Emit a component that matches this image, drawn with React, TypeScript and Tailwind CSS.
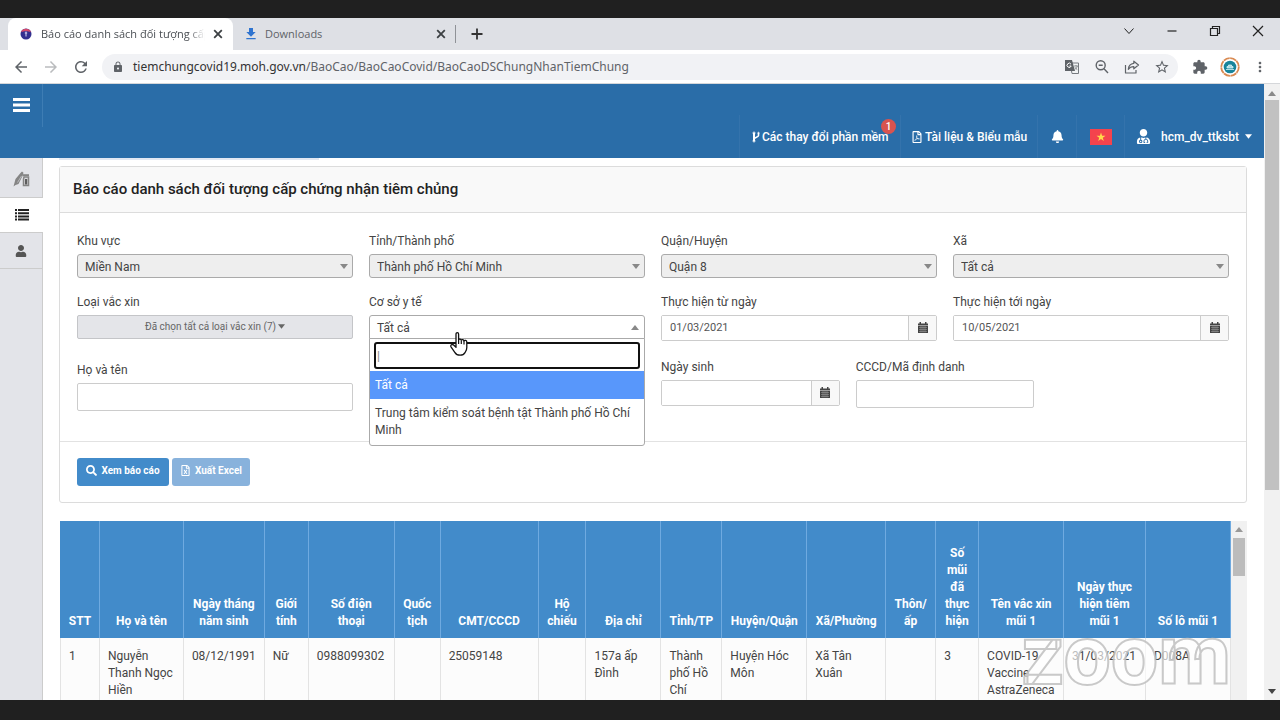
import React from "react";
import { FaBell, FaRegFileExcel, FaRegFilePdf, FaSearch, FaUser, FaUserMd } from "react-icons/fa";
import {
  MdArrowBack,
  MdArrowForward,
  MdExtension,
  MdFileDownload,
  MdLock,
  MdMoreVert,
  MdRefresh,
  MdStarBorder,
} from "react-icons/md";

type Column = { title: string; value: string; width: number };

const COLUMNS: Column[] = [
  { title: "STT", value: "1", width: 39 },
  { title: "Họ và tên", value: "Nguyễn Thanh Ngọc Hiền", width: 84 },
  { title: "Ngày tháng năm sinh", value: "08/12/1991", width: 81 },
  { title: "Giới tính", value: "Nữ", width: 44 },
  { title: "Số điện thoại", value: "0988099302", width: 86 },
  { title: "Quốc tịch", value: "", width: 46 },
  { title: "CMT/CCCD", value: "25059148", width: 98 },
  { title: "Hộ chiếu", value: "", width: 48 },
  { title: "Địa chỉ", value: "157a ấp Đình", width: 75 },
  { title: "Tỉnh/TP", value: "Thành phố Hồ Chí Minh", width: 61 },
  { title: "Huyện/Quận", value: "Huyện Hóc Môn", width: 85 },
  { title: "Xã/Phường", value: "Xã Tân Xuân", width: 79 },
  { title: "Thôn/ ấp", value: "", width: 50 },
  { title: "Số mũi đã thực hiện", value: "3", width: 43 },
  { title: "Tên vắc xin mũi 1", value: "COVID-19 Vaccine AstraZeneca", width: 85 },
  { title: "Ngày thực hiện tiêm mũi 1", value: "31/03/2021", width: 82 },
  { title: "Số lô mũi 1", value: "D008A", width: 85 },
];

const TOTAL_WIDTH = COLUMNS.reduce((sum, c) => sum + c.width, 0);

function Caret({ up = false, className = "" }: { up?: boolean; className?: string }) {
  return (
    <svg viewBox="0 0 8 5" className={`h-[5px] w-2 fill-current ${className}`} aria-hidden="true">
      <path d={up ? "M0 5h8L4 0z" : "M0 0h8L4 5z"} />
    </svg>
  );
}

function CloseIcon() {
  return (
    <svg viewBox="0 0 14 14" className="size-3.5" stroke="#3c4043" strokeWidth="1.800" aria-hidden="true">
      <path d="m3.200 3.200 7.600 7.600M10.800 3.200l-7.600 7.600" />
    </svg>
  );
}

function TranslateIcon() {
  return (
    <svg viewBox="0 0 16 16" className="size-4" aria-hidden="true">
      <path d="M6 4h8.5v10.5H8z" fill="#f1f3f4" stroke="#777b80" />
      <path d="M1 1h7l3 11H1z" fill="#5f6368" />
      <path d="M7 5.200a2.100 2.100 0 1 0 .2 1.800H5.400" fill="none" stroke="#fff" />
      <path d="M10 7h4M12 6v1M13.300 7c-.4 1.700-1.300 2.800-2.600 3.500M11 8.200c.6 1.200 1.300 1.900 2.300 2.400" fill="none" stroke="#777b80" strokeWidth=".8" />
    </svg>
  );
}

function ZoomOutIcon() {
  return (
    <svg viewBox="0 0 16 16" className="size-4" fill="none" stroke="#5f6368" strokeWidth="1.400" aria-hidden="true">
      <circle cx="6.700" cy="6.300" r="4.500" />
      <path d="M10 9.700l4 4.200M4.700 6.300h4" />
    </svg>
  );
}

function ShareIcon() {
  return (
    <svg viewBox="0 0 16 16" className="size-4" fill="none" stroke="#5f6368" strokeWidth="1.200" strokeLinejoin="round" aria-hidden="true">
      <path d="M1.500 6v8h10.500v-3" />
      <path d="M9.800 2.200 14.500 6l-4.700 3.800V7.600c-2.700 0-4.200.8-5.500 2.700.3-3.300 2.200-5.500 5.500-5.900z" />
    </svg>
  );
}

function MenuIcon() {
  return (
    <svg viewBox="0 0 17 15" className="h-[15px] w-[17px] fill-current" aria-hidden="true">
      <path d="M0 0h17v3H0zM0 5.500h17v3H0zM0 11h17v3H0z" />
    </svg>
  );
}

function CalendarIcon() {
  return (
    <svg viewBox="0 0 10 11" className="h-[11px] w-2.5" aria-hidden="true">
      <path d="M0 1.500h1.500V0H3v1.500h4V0h1.500v1.500H10V11H0z" fill="#444" />
      <path d="M1 5.500h8M1 7.500h8M1 9.500h8M3 4v6.500M5 4v6.500M7 4v6.500" stroke="#a5a5a5" strokeWidth=".5" />
      <path d="M0 3.500h10" stroke="#ddd" strokeWidth=".6" />
    </svg>
  );
}

function ListIcon() {
  return (
    <svg viewBox="0 0 14 12" className="h-3 w-3.5 fill-[#222]" aria-hidden="true">
      <path d="M0 0h2v2H0zM3 0h11v2H3zM0 3.200h2v2H0zM3 3.200h11v2H3zM0 6.400h2v2H0zM3 6.400h11v2H3zM0 9.600h2v2H0zM3 9.600h11v2H3z" />
    </svg>
  );
}

function VaccineIcon() {
  return (
    <svg viewBox="0 0 17 16" className="h-4 w-[17px]" aria-hidden="true">
      <path d="M.5 15.500 2.500 8l5-6L9 .5l1.500 1.300L9.500 5 5.500 13l-3 1z" fill="#858585" />
      <path d="M4.500 11.500 8.500 5" stroke="#b9b9bd" />
      <path d="M11 6h4.500v8.500h-5V8z" fill="#d8d8dc" stroke="#858585" strokeWidth="1.500" />
      <path d="M12 8h2.200v5.500H12z" fill="#5d5d5d" />
      <path d="M9.500 4.200h6.500" stroke="#858585" strokeWidth="2" />
    </svg>
  );
}

function HandCursor() {
  return (
    <svg viewBox="0 0 18 24" className="pointer-events-none absolute top-[17px] left-[81px] z-20 h-6 w-[18px]" aria-hidden="true">
      <path
        d="M6 2.200c0-2 2.600-2 2.600 0v5.600c.3-1 2.400-1 2.700.4.500-.9 2.300-.7 2.600.6.700-.8 2.900-.5 2.900 1.300v5.400c0 2.500-1 3.600-1.800 5.100-1 1.800-2.700 2.600-4.900 2.600-2.600 0-4.100-.9-5.300-2.900L1 14.800c-.8-1.700 1.100-3 2.600-1.700L6 15.300z"
        fill="#fff"
        stroke="#111"
        strokeWidth="1.300"
        strokeLinejoin="round"
      />
      <path d="M8.600 8v4M11.300 8.500V12M14 9v3.500" stroke="#111" strokeWidth="1.200" />
    </svg>
  );
}

function Label({ id, children }: { id: string; children: React.ReactNode }) {
  return (
    <label htmlFor={id} className="block h-6 text-xs leading-[22px]">
      {children}
    </label>
  );
}

function SelectField({ id, label, value }: { id: string; label: string; value: string }) {
  return (
    <div>
      <Label id={id}>{label}</Label>
      <div className="relative">
        <select
          id={id}
          className="block h-6 w-full appearance-none rounded-[3px] border border-[#aaa] bg-[#eee] pt-px pr-6 pl-[7px] text-xs text-[#444]"
        >
          <option>{value}</option>
        </select>
        <Caret className="pointer-events-none absolute top-2.5 right-[5px] text-[#888]" />
      </div>
    </div>
  );
}

function DateField({ id, label, value }: { id: string; label: string; value: string }) {
  return (
    <div>
      <Label id={id}>{label}</Label>
      <div className="flex h-[26px] rounded-[2px] border border-[#ccc]">
        <input id={id} defaultValue={value} className="min-w-0 flex-1 bg-white pl-2 text-[11px] text-[#555] outline-none" />
        <button type="button" aria-label={`Chọn ${label}`} className="flex w-7 items-center justify-center border-l border-[#ccc] bg-[#f8f8f8] pb-0.5">
          <CalendarIcon />
        </button>
      </div>
    </div>
  );
}

function TextField({ id, label }: { id: string; label: string }) {
  return (
    <div>
      <Label id={id}>{label}</Label>
      <input id={id} className="block h-7 w-full rounded-[2px] border border-[#ccc] bg-white px-2 text-[11px] outline-none" />
    </div>
  );
}

function BrowserChrome() {
  return (
    <div className="shrink-0 font-['Open_Sans','Noto_Sans',sans-serif] text-[#5f6368]">
      <div className="flex h-8 items-stretch bg-[#dee0e5] pl-2">
        <div className="flex w-[225px] items-center rounded-t-lg bg-white pr-2 pl-3">
          <svg viewBox="0 0 12 12" className="size-3 shrink-0" aria-hidden="true">
            <circle cx="6" cy="6" r="5.500" fill="#33308f" />
            <path d="M1 4a5.500 5.500 0 0 1 10 0L6 3z" fill="#d6496b" />
            <path d="M6 3.500v5M4.800 5h2.400" stroke="#d9d5f5" />
          </svg>
          <span className="ml-[9px] min-w-0 flex-1 overflow-hidden mask-r-from-90% text-[11px] whitespace-nowrap text-[#4b4f54]">
            Báo cáo danh sách đối tượng cấp
          </span>
          <button type="button" aria-label="Đóng thẻ" className="ml-1.5">
            <CloseIcon />
          </button>
        </div>
        <div className="flex w-[223px] items-center pl-2.5">
          <MdFileDownload className="size-4 text-[#2f74d0]" />
          <span className="ml-1.5 flex-1 text-[11px]">Downloads</span>
          <button type="button" aria-label="Đóng thẻ" className="mr-[7px]">
            <CloseIcon />
          </button>
          <span className="h-[18px] w-px bg-[#8f9297]" />
        </div>
        <button type="button" aria-label="Thẻ mới" className="ml-[15px] text-[#333]">
          <svg viewBox="0 0 12 12" className="size-3" stroke="currentColor" strokeWidth="1.800" aria-hidden="true">
            <path d="M6 .5v11M.5 6h11" />
          </svg>
        </button>
        <div className="mb-1.5 ml-auto flex items-center gap-[31px] pr-4 text-[#222]">
          <svg viewBox="0 0 12 12" className="size-3" fill="none" stroke="currentColor" aria-hidden="true">
            <path d="M1.500 3.500 6 8.500l4.500-5" />
          </svg>
          <svg viewBox="0 0 12 12" className="size-3" stroke="currentColor" strokeWidth="1.200" aria-hidden="true">
            <path d="M1.500 6h9" />
          </svg>
          <svg viewBox="0 0 12 12" className="size-3" fill="none" stroke="currentColor" strokeWidth="1.200" aria-hidden="true">
            <path d="M1.500 3.500h7v7h-7zM3.500 3.500v-2h7v7h-2" />
          </svg>
          <svg viewBox="0 0 12 12" className="size-3" stroke="currentColor" strokeWidth="1.200" aria-hidden="true">
            <path d="m1 1 10 10M11 1 1 11" />
          </svg>
        </div>
      </div>
      <div className="flex h-[34px] items-center border-b border-[#d5d7da] bg-white pr-3 pl-3">
        <MdArrowBack className="size-[18px]" />
        <MdArrowForward className="ml-3 size-[18px] text-[#babcbe]" />
        <MdRefresh className="ml-3 size-[18px]" />
        <div className="ml-3 flex h-[26px] flex-1 items-center rounded-full bg-[#f1f2f5] pr-2 pl-2.5">
          <MdLock className="size-3" />
          <span className="ml-[9px] flex-1 font-['Noto_Sans',sans-serif] text-xs leading-5">
            <span className="text-[#333]">tiemchungcovid19.moh.gov.vn</span>/BaoCao/BaoCaoCovid/BaoCaoDSChungNhanTiemChung
          </span>
          <div className="flex items-center gap-3.5">
            <TranslateIcon />
            <ZoomOutIcon />
            <ShareIcon />
            <MdStarBorder className="size-4" />
          </div>
        </div>
        <div className="flex items-center gap-3 pl-3.5">
          <MdExtension className="size-4" />
          <svg viewBox="0 0 20 20" className="size-5" aria-hidden="true">
            <circle cx="10" cy="10" r="8.800" fill="#fff" stroke="#d98a52" strokeWidth="1.800" strokeDasharray="6.400 .5" />
            <circle cx="10" cy="10" r="6.300" fill="#18849b" />
            <path d="M6 12.500h8M7 11V9.500h1.500V8h3v1.500H13V11z" stroke="#d9f2f5" strokeWidth=".8" fill="#a9d9e2" />
          </svg>
          <MdMoreVert className="size-4" />
        </div>
      </div>
    </div>
  );
}

function SiteHeader() {
  return (
    <header className="flex h-[74px] shrink-0 justify-between bg-[#2a6da8] text-xs font-medium text-white">
      <button type="button" aria-label="Trình đơn" className="flex h-[43px] w-[43px] items-center justify-center border-r border-[#3e7db4]">
        <MenuIcon />
      </button>
      <nav className="flex h-[43px] self-end [&>*]:border-l [&>*]:border-[#3473ac]">
        <a href="#changes" className="relative flex w-[161px] items-center pl-3 whitespace-nowrap">
          <svg viewBox="0 0 8 12" className="mr-0.5 h-3 w-2" fill="none" stroke="currentColor" aria-hidden="true">
            <path d="M2 2v8" strokeWidth="2" />
            <path d="M6.500 2v2.500C6.500 6.500 2 6 2 8.500" strokeWidth="1.600" />
            <circle cx="2" cy="2" r="1" />
            <circle cx="2" cy="10" r="1" />
            <circle cx="6.500" cy="2" r=".7" />
          </svg>
          Các thay đổi phần mềm
          <span className="absolute top-1 right-1 flex size-[15px] items-center justify-center rounded-full bg-[#d9534f] text-[10px] leading-none">
            1
          </span>
        </a>
        <a href="#documents" className="flex w-[137px] items-center pl-2.5 whitespace-nowrap">
          <FaRegFilePdf className="mr-0.5 size-3" />
          Tài liệu &amp; Biểu mẫu
        </a>
        <a href="#notifications" aria-label="Thông báo" className="flex w-[39px] items-center justify-center">
          <FaBell className="size-[13px]" />
        </a>
        <a href="#language" aria-label="Tiếng Việt" className="flex w-12 items-center justify-center">
          <svg viewBox="0 0 22 16" className="h-4 w-[22px]" aria-hidden="true">
            <path d="M0 0h22v16H0z" fill="#f4434d" />
            <path d="m11 3.500 1.100 3.200h3.400l-2.700 2 1 3.300-2.800-2-2.800 2 1-3.300-2.700-2h3.400z" fill="#ffd94a" />
          </svg>
        </a>
        <a href="#account" className="flex w-[140px] items-center pl-[11px]">
          <FaUserMd className="size-[15px]" />
          <span className="ml-2.5 flex-1">hcm_dv_ttksbt</span>
          <Caret className="mr-3 h-[3px] w-[7px]" />
        </a>
      </nav>
    </header>
  );
}

function FacilityPicker() {
  return (
    <div>
      <Label id="facility">Cơ sở y tế</Label>
      <div className="relative">
        <button
          id="facility"
          type="button"
          aria-expanded="true"
          className="flex h-6 w-full items-center justify-between rounded-t-[3px] border border-[#aaa] bg-white pt-px pr-[5px] pl-[7px] text-xs text-[#444]"
        >
          Tất cả
          <Caret up className="text-[#888]" />
        </button>
        <div className="absolute inset-x-0 top-[23px] z-10 rounded-b-[3px] border border-[#aaa] bg-white text-xs text-[#444]">
          <div className="p-1 pt-[3px] pb-0.5">
            <input aria-label="Tìm cơ sở y tế" defaultValue="|" className="block h-[27px] w-full rounded-[3px] border-2 border-[#111] pl-px text-[#888] outline-none" />
          </div>
          <ul role="listbox" aria-label="Cơ sở y tế">
            <li role="option" aria-selected="true" className="bg-[#5897fb] px-[5px] py-1.5 leading-4 text-white">
              Tất cả
            </li>
            <li role="option" aria-selected="false" className="px-[5px] py-1.5 leading-[17px]">
              Trung tâm kiểm soát bệnh tật Thành phố Hồ Chí Minh
            </li>
          </ul>
        </div>
        <HandCursor />
      </div>
    </div>
  );
}

function FilterCard() {
  return (
    <section className="mt-1.5 rounded-[3px] border border-[#dcdcdc] bg-white">
      <h1 className="flex h-[46px] items-center border-b border-[#dcdcdc] bg-[#f9f9f9] px-[13px] text-[15px] font-medium text-[#222]">
        Báo cáo danh sách đối tượng cấp chứng nhận tiêm chủng
      </h1>
      <div className="grid grid-cols-4 gap-x-4 px-[17px] pt-[17px] pb-[30px]">
        <SelectField id="region" label="Khu vực" value="Miền Nam" />
        <SelectField id="province" label="Tỉnh/Thành phố" value="Thành phố Hồ Chí Minh" />
        <SelectField id="district" label="Quận/Huyện" value="Quận 8" />
        <SelectField id="ward" label="Xã" value="Tất cả" />
        <div className="col-span-4 mt-[13px] grid grid-cols-4 gap-x-4">
          <div>
            <Label id="vaccine">Loại vắc xin</Label>
            <button
              id="vaccine"
              type="button"
              className="flex h-6 w-full items-center justify-center gap-0.5 rounded-[2px] border border-[#c4c5c8] bg-[#e4e5e9] pb-0.5 text-[10px] text-[#666]"
            >
              Đã chọn tất cả loại vắc xin (7)
              <Caret className="h-1 w-[7px]" />
            </button>
          </div>
          <FacilityPicker />
          <DateField id="from" label="Thực hiện từ ngày" value="01/03/2021" />
          <DateField id="to" label="Thực hiện tới ngày" value="10/05/2021" />
        </div>
        <div className="col-span-4 mt-[15px] grid grid-cols-4 gap-x-4">
          <div className="pt-[3px]">
            <TextField id="name" label="Họ và tên" />
          </div>
          <div className="col-span-2 col-start-3 grid grid-cols-3 gap-x-4">
            <DateField id="birth" label="Ngày sinh" value="" />
            <TextField id="citizen" label="CCCD/Mã định danh" />
          </div>
        </div>
      </div>
      <div className="flex gap-[3px] border-t border-[#e2e2e2] px-[17px] pt-4 pb-4 text-[10px] font-bold text-white">
        <button type="button" className="flex h-7 w-23 items-center justify-center gap-1 rounded-[3px] bg-[#428bca] pb-[3px]">
          <FaSearch className="size-[11px]" />
          Xem báo cáo
        </button>
        <button type="button" className="flex h-7 w-[78px] items-center justify-center gap-1 rounded-[3px] bg-[#88b2dc] pb-[3px]">
          <FaRegFileExcel className="size-[11px]" />
          Xuất Excel
        </button>
      </div>
    </section>
  );
}

function ResultTable() {
  return (
    <div className="relative mt-[18px] flex min-h-0 flex-1 overflow-hidden">
      <div className="min-w-0 flex-1 pl-px">
        <table className="w-full table-fixed border-collapse text-xs leading-[17px]">
          <colgroup>
            {COLUMNS.map((c) => (
              <col key={c.title} style={{ width: `${(c.width / TOTAL_WIDTH) * 100}%` }} />
            ))}
          </colgroup>
          <thead>
            <tr className="h-[117px] bg-[#428bca] text-white">
              {COLUMNS.map((c) => (
                <th key={c.title} className="border-x border-[#6faae0] px-[7px] pb-2 align-bottom font-bold first:border-l-[#428bca] nth-[5]:px-3">
                  {c.title}
                </th>
              ))}
            </tr>
          </thead>
          <tbody>
            <tr className="bg-[#fcfcfc] text-[#444]">
              {COLUMNS.map((c) => (
                <td key={c.title} className="border-x border-[#e3e3e3] pt-2.5 pb-2 pl-2 align-top nth-[10]:pr-2 nth-[12]:pr-2">
                  {c.value}
                </td>
              ))}
            </tr>
          </tbody>
        </table>
      </div>
      <div className="flex w-4 shrink-0 flex-col items-center bg-[#f1f1f1] pt-1.5 text-[#999]">
        <Caret up className="h-1" />
        <div className="mt-1.5 h-[38px] w-3 bg-[#bcbcbc]" />
      </div>
      <div className="pointer-events-none absolute right-4 -bottom-0.5 font-[Roboto,sans-serif] text-[84px] leading-[92px] font-bold text-white/65 [-webkit-text-stroke:2px_#bbbc]">
        zoom
      </div>
    </div>
  );
}

export default function App() {
  return (
    <div className="flex h-screen flex-col overflow-hidden border-t-[18px] border-b-[20px] border-[#202020] bg-white font-[Roboto,'Noto_Sans',sans-serif] text-[#444]">
      <BrowserChrome />
      <div className="flex min-h-0 flex-1">
        <div className="flex min-w-0 flex-1 flex-col">
          <SiteHeader />
          <div className="flex min-h-0 flex-1">
            <aside className="w-[43px] shrink-0 border-r border-[#ccc] bg-[#e3e4e9] pt-0.5 text-[#555]">
              <a href="#vaccination" aria-label="Tiêm chủng" className="flex h-[38px] items-center justify-center border-b border-[#ccc]">
                <VaccineIcon />
              </a>
              <a href="#reports" aria-label="Báo cáo" className="-mr-px flex h-[34px] items-center justify-center bg-white">
                <ListIcon />
              </a>
              <a href="#users" aria-label="Người dùng" className="flex h-[37px] items-center justify-center border-y border-[#ccc]">
                <FaUser className="size-3" />
              </a>
            </aside>
            <main className="flex min-w-0 flex-1 flex-col pr-[17px] pl-4">
              <div className="h-0.5 w-[260px] shrink-0 bg-[#e2e8f2]" />
              <FilterCard />
              <ResultTable />
            </main>
          </div>
        </div>
        <div className="flex w-4 shrink-0 flex-col items-center bg-[#f1f1f1] pt-[7px] pb-1.5 text-[#8a8a8a]">
          <Caret up />
          <div className="mt-1 h-[390px] w-3.5 bg-[#c1c1c1]" />
          <Caret className="mt-auto h-1 text-[#444]" />
        </div>
      </div>
    </div>
  );
}
